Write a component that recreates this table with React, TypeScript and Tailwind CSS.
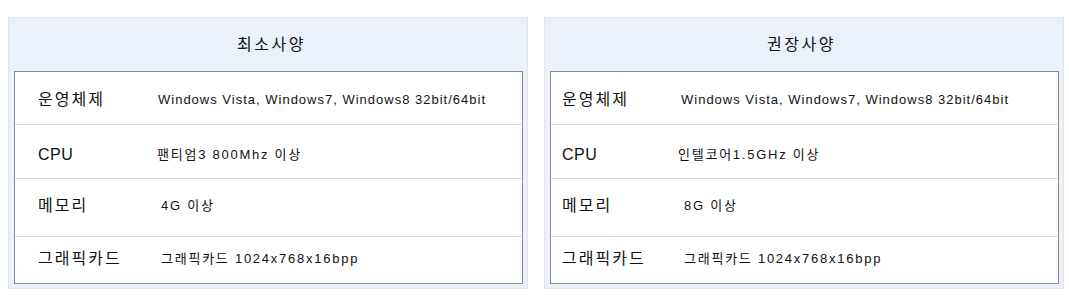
type SpecRow = {
  label: string;
  value: string;
  valueLeft: string;
  rowClass: string;
};

type SpecCard = {
  title: string;
  titleClass: string;
  cardClass: string;
  labelLeft: string;
  rows: SpecRow[];
};

const rowStyles = [
  "h-[52px] pt-[4px]",
  "h-[54px] border-t border-[#dcdcdc] pt-[6px]",
  "h-[58px] border-t border-[#dcdcdc] pb-[4px]",
  "h-[47px] border-t border-[#dcdcdc] pb-[2px]",
];

const cards: SpecCard[] = [
  {
    title: "최소사양",
    titleClass: "pl-[7px]",
    cardClass: "border-[#e4e2e4]",
    labelLeft: "pl-[23px]",
    rows: [
      { label: "운영체제", value: "Windows Vista, Windows7, Windows8 32bit/64bit", valueLeft: "left-[143px] tracking-[1px]", rowClass: rowStyles[0] },
      { label: "CPU", value: "팬티엄3 800Mhz 이상", valueLeft: "left-[142px] tracking-[1.75px]", rowClass: rowStyles[1] },
      { label: "메모리", value: "4G 이상", valueLeft: "left-[146px] tracking-[1.75px]", rowClass: rowStyles[2] },
      { label: "그래픽카드", value: "그래픽카드 1024x768x16bpp", valueLeft: "left-[146px] tracking-[1.75px]", rowClass: rowStyles[3] },
    ],
  },
  {
    title: "권장사양",
    titleClass: "pr-[5px]",
    cardClass: "border-[#e4e2e4] border-l-[#f1dde4]",
    labelLeft: "pl-[11px]",
    rows: [
      { label: "운영체제", value: "Windows Vista, Windows7, Windows8 32bit/64bit", valueLeft: "left-[130px] tracking-[1px]", rowClass: rowStyles[0] },
      { label: "CPU", value: "인텔코어1.5GHz 이상", valueLeft: "left-[127px] tracking-[1.75px]", rowClass: rowStyles[1] },
      { label: "메모리", value: "8G 이상", valueLeft: "left-[133px] tracking-[1.75px]", rowClass: rowStyles[2] },
      { label: "그래픽카드", value: "그래픽카드 1024x768x16bpp", valueLeft: "left-[133px] tracking-[1.75px]", rowClass: rowStyles[3] },
    ],
  },
];

const Card = ({ card }: { card: SpecCard }) => (
  <div className={`flex h-[272px] w-[520px] flex-col border bg-[#eaf1fa] ${card.cardClass}`}>
    <div className={`flex h-[53px] items-center justify-center text-[16px] tracking-[2.5px] text-[#111] ${card.titleClass}`}>
      {card.title}
    </div>
    <div className="ml-[5px] mr-[4px] flex flex-col border border-[#8f8f8f] bg-white">
      {card.rows.map((row) => (
        <div key={row.label} className={`relative flex items-center ${row.rowClass}`}>
          <span
            className={`text-[16px] text-[#111] ${card.labelLeft} ${
              row.label === "CPU" ? "tracking-[0.5px]" : "tracking-[2px]"
            }`}
          >
            {row.label}
          </span>
          <span className={`absolute text-[13px] text-[#111] ${row.valueLeft}`}>{row.value}</span>
        </div>
      ))}
    </div>
  </div>
);

export default function App() {
  return (
    <div
      className="flex h-[297px] w-[1069px] gap-[16px] bg-white pl-[8px] pt-[17px]"
      style={{ fontFamily: '"Liberation Sans", "Noto Sans CJK KR", sans-serif' }}
    >
      {cards.map((c) => (
        <Card key={c.title} card={c} />
      ))}
    </div>
  );
}
